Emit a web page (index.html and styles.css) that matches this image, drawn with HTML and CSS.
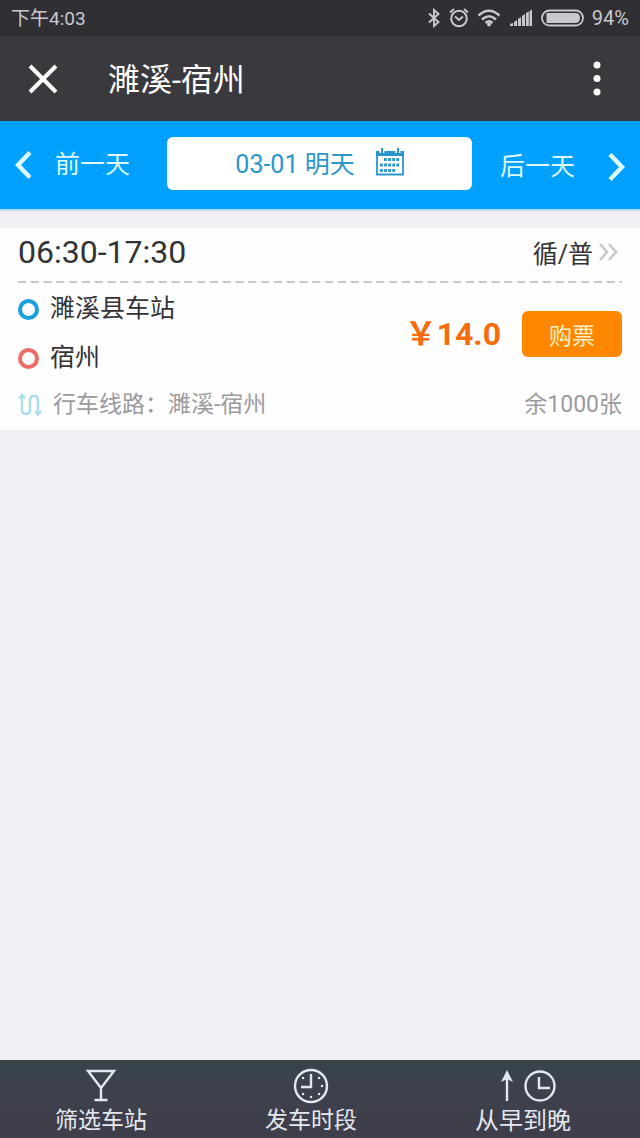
FILE: index.html
```html
<!DOCTYPE html>
<html lang="zh-CN">
<head>
<meta charset="utf-8">
<meta name="viewport" content="width=device-width, initial-scale=1">
<title>濉溪-宿州</title>
<link rel="stylesheet" href="styles.css">
</head>
<body>
<div class="status">
  <span class="status-time">下午4:03</span>
  <div class="status-icons">
    <svg width="14" height="20" viewBox="0 0 14 20" fill="none" stroke="currentColor" stroke-width="1.9"><path d="M2 5.500l9.500 8.500L7 18V2l4.500 4L2 14.500"/></svg>
    <svg width="20" height="20" viewBox="0 0 20 20" fill="none" stroke="currentColor" stroke-width="2"><circle cx="10" cy="10.500" r="7.800"/><path d="M6 8.500l4 3.500 4-3.500M1 4.500l4-3.500M19 4.500l-4-3.500"/></svg>
    <svg width="24" height="20" viewBox="0 0 24 20" fill="none" stroke="currentColor" stroke-width="2.500"><path d="M1.500 7.500q10.500-9.500 21 0M5 11.500q7-6.500 14 0M8.500 15q3.500-3.200 7 0"/><circle cx="12" cy="16.500" r="2" fill="currentColor" stroke="none"/></svg>
    <svg width="24" height="20" viewBox="0 0 24 20" fill="currentColor"><path d="M1 18v-2l3-1v3zM5 18v-4l3-2v6zM9 18v-7l3-2v9zM13 18V8l3-2v12zM17 18V5l2.800-1.500V18zM20.500 18V3L23 1.500V18z"/></svg>
    <svg width="43" height="20" viewBox="0 0 43 20"><rect x="1" y="2.500" width="41" height="15" rx="7.500" fill="none" stroke="currentColor" stroke-width="1.800"/><path d="M5.500 5H34q5 0 5 5t-5 5H5.500z" fill="currentColor"/></svg>
    <span class="status-battery">94%</span>
  </div>
</div>
<header class="header">
  <button class="icon-button" aria-label="关闭"><svg width="30" height="30" viewBox="0 0 30 30" fill="none" stroke="currentColor" stroke-width="4"><path d="M2 2l26 26M28 2L2 28"/></svg></button>
  <h1 class="title">濉溪-宿州</h1>
  <button class="icon-button" aria-label="更多"><svg width="8" height="36" viewBox="0 0 8 36" fill="currentColor"><circle cx="4" cy="4" r="3.500"/><circle cx="4" cy="17.500" r="3.500"/><circle cx="4" cy="31" r="3.500"/></svg></button>
</header>
<nav class="days">
  <button class="day"><svg width="18" height="30" viewBox="0 0 18 30" fill="none" stroke="currentColor" stroke-width="4.500"><path d="M15 2.500L3 15l12 12.500"/></svg><span>前一天</span></button>
  <button class="date"><span>03-01 明天</span>
    <svg width="28" height="28" viewBox="0 0 28 28" fill="none" stroke="currentColor"><path d="M1 5v21.500h26V5" stroke-width="1.800"/><path d="M0 5.500h28" stroke-width="5"/><path d="M6 0v5M22 0v5" stroke="#fff" stroke-width="5"/><path d="M6 0v5M22 0v5" stroke-width="2"/><path d="M8 11.500h16M4 17h20M4 22.500h16" stroke-width="3" stroke-dasharray="2.800 1.300"/></svg>
  </button>
  <button class="day day-next"><span>后一天</span><svg width="18" height="30" viewBox="0 0 18 30" fill="none" stroke="currentColor" stroke-width="4.500"><path d="M3 2.500l12 12.500L3 27.500"/></svg></button>
</nav>
<main class="content">
  <article class="card">
    <div class="card-head">
      <span class="hours">06:30-17:30</span>
      <a class="type" href="#detail">循/普<svg width="20" height="18" viewBox="0 0 20 18" fill="none" stroke="#c9c9c9" stroke-width="2.600"><path d="M2 1l7 8-7 8M11 1l7 8-7 8"/></svg></a>
    </div>
    <svg class="divider" width="100%" height="2" aria-hidden="true"><line x1="0" y1="1" x2="100%" y2="1" stroke="#c8c6c9" stroke-width="2" stroke-dasharray="8 4.800"/></svg>
    <div class="trip">
      <div class="stops">
        <div class="stop"><span class="ring ring-from"></span><span class="stop-name">濉溪县车站</span></div>
        <div class="stop"><span class="ring ring-to"></span><span class="stop-name">宿州</span></div>
      </div>
      <strong class="price">￥14.0</strong>
      <button class="buy">购票</button>
    </div>
    <div class="card-foot">
      <span class="route"><svg width="24" height="24" viewBox="0 0 24 24" fill="none" stroke="#a9dcec" stroke-width="2.400"><path d="M4 3v14q0 4 4 4t4-4V7q0-4 4-4t4 4v13"/><path d="M1 5.500l3-4 3 4M17 18l3 4 3-4" stroke-width="2"/></svg><span class="route-text">行车线路：濉溪-宿州</span></span>
      <span class="left">余1000张</span>
    </div>
  </article>
</main>
<footer class="tabs">
  <button class="tab">
    <svg width="32" height="36" viewBox="0 0 32 36" fill="none" stroke="currentColor" stroke-width="2.400"><path d="M3 3h26L16 20zM16 19v13M9.500 32h13"/></svg>
    <span>筛选车站</span>
  </button>
  <button class="tab">
    <svg width="36" height="36" viewBox="0 0 36 36" fill="none" stroke="currentColor" stroke-width="2.400"><circle cx="18" cy="18" r="16"/><path d="M18 6v13H8"/><path d="M26 10h.1M29 18h.1M26 26h.1M18 29h.1M10 26h.1M10 10h.1" stroke-linecap="round"/></svg>
    <span>发车时段</span>
  </button>
  <button class="tab tab-sort">
    <svg width="66" height="36" viewBox="-8 0 66 36" fill="none" stroke="currentColor" stroke-width="2.400"><path d="M9 9v24"/><path d="M9 2l6 12-6-3-6 3z" fill="currentColor" stroke="none"/><circle cx="42" cy="18" r="14.500"/><path d="M41 9v11h11"/></svg>
    <span>从早到晚</span>
  </button>
</footer>
</body>
</html>
```
FILE: styles.css
```css
* { box-sizing: border-box; }

body {
  margin: 0;
  min-height: 100vh;
  display: flex;
  flex-direction: column;
  background: #f1eff3;
  color: #333236;
  font-family: Roboto, "Noto Sans CJK SC", sans-serif;
  font-size: 25px;
}

button {
  padding: 0;
  border: 0;
  background: none;
  color: inherit;
  font: inherit;
  cursor: pointer;
}

svg { display: block; flex: none; }

.status {
  display: flex;
  justify-content: space-between;
  align-items: center;
  height: 36px;
  padding: 0 11px;
  background: #302f34;
  color: #c9c8cd;
  line-height: 24px;
}
.status-time { padding-top: 2px; font-size: 19px; }
.status-battery { font-size: 20px; }
.status-icons { display: flex; align-items: center; gap: 8px; }

.header {
  display: flex;
  align-items: center;
  height: 85px;
  padding: 0 39px 0 28px;
  background: #3a393e;
  color: #fff;
}
.title {
  flex: 1;
  margin: 0;
  padding: 2px 0 0 50px;
  font-size: 32px;
  font-weight: 400;
  line-height: 40px;
}

.days {
  display: flex;
  align-items: center;
  height: 90px;
  padding: 0 15px 4px;
  border-bottom: 2px solid #b5dcf7;
  background: #00a0ff;
}
.day {
  display: flex;
  align-items: center;
  gap: 22px;
  padding-top: 4px;
  color: #dcfaff;
  line-height: 32px;
}
.day-next { gap: 32px; padding-top: 8px; }
.date {
  flex: 1;
  display: flex;
  justify-content: center;
  align-items: center;
  gap: 21px;
  height: 53px;
  margin: 0 28px 0 37px;
  padding-bottom: 2px;
  border-radius: 6px;
  background: #fff;
  color: #2b95cd;
}

.content { flex: 1; padding-top: 17px; }
.card { padding: 0 18px; background: #fefefe; }
.card-head {
  display: flex;
  justify-content: space-between;
  align-items: center;
  height: 53px;
  padding-bottom: 6px;
}
.hours { font-size: 32px; }
.type {
  display: flex;
  align-items: center;
  gap: 5px;
  padding-right: 4px;
  color: inherit;
  text-decoration: none;
}
.trip {
  display: flex;
  align-items: center;
  padding-top: 2px;
}
.stops { flex: 1; }
.stop {
  display: flex;
  align-items: center;
  gap: 11px;
  height: 49px;
}
.stop-name { padding-bottom: 8px; }
.ring {
  width: 21px;
  height: 21px;
  border: 4px solid;
  border-radius: 50%;
}
.ring-from { border-color: #1c9fe2; }
.ring-to { border-color: #ec6c68; }
.price {
  padding-bottom: 6px;
  color: #f66b0c;
  font-size: 32px;
  font-weight: 700;
}
.buy {
  width: 100px;
  height: 46px;
  margin-left: 21px;
  border-radius: 6px;
  background: #ff8700;
  color: #fff0c8;
  font-size: 23px;
}
.card-foot {
  display: flex;
  justify-content: space-between;
  align-items: center;
  height: 47px;
  padding-bottom: 3px;
  color: #9b9a9d;
  font-size: 23px;
}
.route { display: flex; align-items: center; gap: 11px; }
.route-text, .left { padding-bottom: 6px; }

.tabs {
  display: flex;
  justify-content: space-between;
  height: 78px;
  padding: 8px 69px 0 55px;
  background: linear-gradient(#39444b, #3f3f4b 70%);
  color: #e3e8f0;
  font-size: 23px;
}
.tab {
  display: flex;
  flex-direction: column;
  align-items: center;
  line-height: 34px;
}
.tab-sort { font-size: 24px; }
```
